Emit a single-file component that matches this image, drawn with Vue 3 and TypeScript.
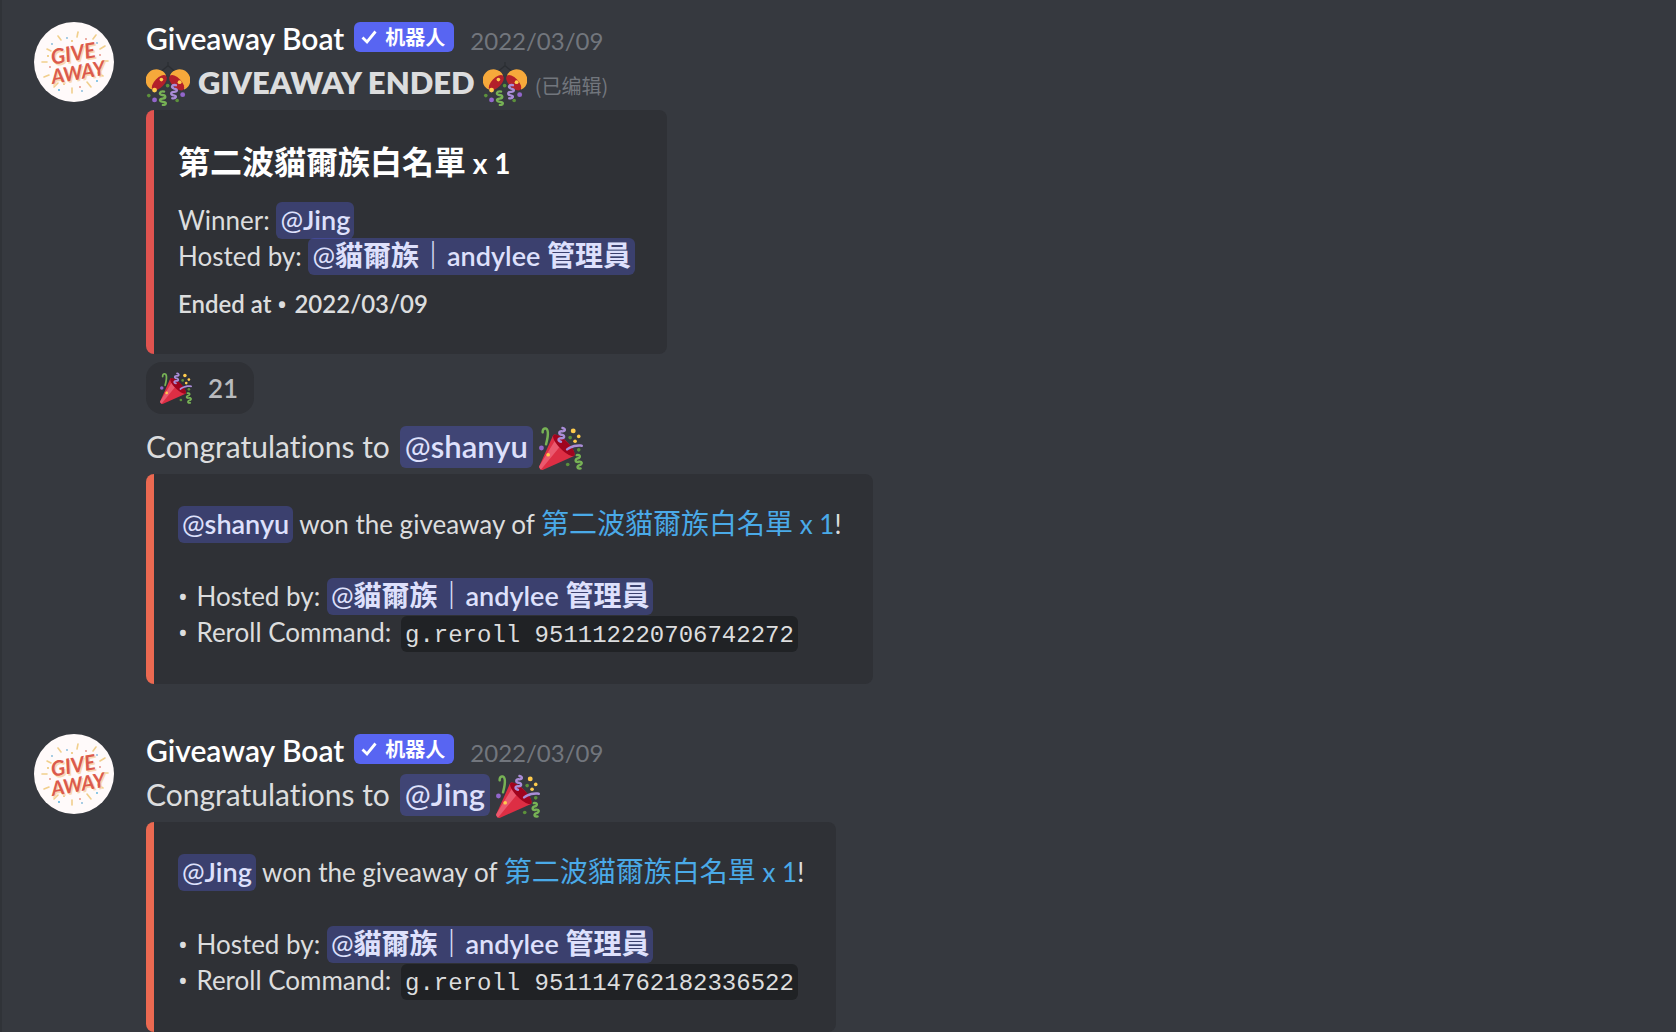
<script setup lang="ts">
import { defineComponent, h } from 'vue'

interface Winner {
  name: string
  rerollId: string
}

const prize = '第二波貓爾族白名單'
const date = '2022/03/09'
const blocks: { key: string; ended: boolean; winner: Winner }[] = [
  { key: 'first', ended: true, winner: { name: 'shanyu', rerollId: '951112220706742272' } },
  { key: 'second', ended: false, winner: { name: 'Jing', rerollId: '951114762182336522' } },
]

const rays: number[][] = [
  [44, 10, 43, 15], [24, 14, 27, 18], [13, 27, 17, 29], [8, 40, 13, 40], [10, 55, 15, 53],
  [20, 65, 24, 61], [38, 66, 38, 71], [53, 60, 57, 65], [64, 51, 69, 54], [69, 39, 74, 39],
  [66, 27, 71, 24], [59, 17, 62, 13],
]
const specks: [number, number, string][] = [
  [33, 16, '#7fb6d8'], [52, 17, '#e58a7c'], [18, 22, '#7fb6d8'], [66, 33, '#e58a7c'], [16, 45, '#e58a7c'],
  [67, 46, '#58b0dc'], [25, 68, '#3fa9dc'], [63, 59, '#58b0dc'], [46, 65, '#e58a7c'], [30, 62, '#e9bd62'],
  [14, 34, '#e9bd62'], [48, 69, '#7fb6d8'], [38, 19, '#e9bd62'], [63, 21, '#7fb6d8'],
]

const Avatar = defineComponent({
  render() {
    return h('svg', { viewBox: '0 0 80 80', role: 'img', 'aria-label': 'Giveaway Boat' }, [
      h('circle', { cx: 40, cy: 40, r: 40, fill: '#fffafa' }),
      ...rays.map(([x1, y1, x2, y2]) =>
        h('line', { x1, y1, x2, y2, stroke: '#f1cf8c', 'stroke-width': 1.6, 'stroke-linecap': 'round' })),
      ...specks.map(([cx, cy, fill]) => h('circle', { cx, cy, r: 0.9, fill })),
      ...[['#f9d9b2', 1.6], ['#dc5a4c', 0]].map(([fill, d]) =>
        h('g', {
          fill,
          transform: `translate(${d} ${d}) rotate(-10 40 40)`,
          'font-family': 'Lato, sans-serif',
          'font-weight': 700,
          'font-style': 'italic',
        }, [
          h('text', { x: 18, y: 39, 'font-size': 21 }, 'GIVE'),
          h('text', { x: 15, y: 58, 'font-size': 20 }, 'AWAY'),
        ])),
    ])
  },
})

const Popper = defineComponent({
  render() {
    return h('svg', { viewBox: '0 0 36 36', role: 'img', 'aria-label': 'party popper' }, [
      h('path', { fill: '#DD2E44', d: 'M11.626 7.488c-.112.112-.197.247-.268.395l-.008-.008L.134 33.141l.011.011c-.208.403.14 1.223.853 1.937.713.713 1.533 1.061 1.936.853l.01.01L28.21 24.735l-.008-.009c.147-.07.282-.155.395-.269 1.562-1.562-.971-6.627-5.656-11.313-4.687-4.686-9.752-7.218-11.315-5.656z' }),
      h('path', { fill: '#EA596E', d: 'M13 12L.416 32.506l-.282.635.011.011c-.208.403.14 1.223.853 1.937.232.232.473.408.709.557L17 17l-4-5z' }),
      h('path', { fill: '#A0041E', d: 'M23.012 13.066c4.67 4.672 7.263 9.652 5.789 11.124-1.473 1.474-6.453-1.118-11.126-5.788-4.671-4.672-7.263-9.654-5.79-11.127 1.474-1.473 6.454 1.119 11.127 5.791z' }),
      h('path', { fill: '#AA8DD8', d: 'M18.59 13.609c-.199.161-.459.245-.734.215-.868-.094-1.598-.396-2.109-.873-.541-.505-.808-1.183-.735-1.862.128-1.192 1.324-2.286 3.363-2.066.793.085 1.147-.17 1.159-.292.014-.121-.277-.446-1.07-.532-.868-.094-1.598-.396-2.11-.873-.541-.505-.809-1.183-.735-1.862.13-1.192 1.325-2.286 3.362-2.065.578.062.883-.057 1.012-.134.103-.063.144-.123.148-.158.012-.121-.275-.446-1.07-.532-.549-.06-.947-.552-.886-1.102.059-.549.55-.946 1.101-.886 2.037.219 2.973 1.542 2.844 2.735-.13 1.194-1.325 2.286-3.364 2.067-.578-.063-.88.057-1.01.134-.103.062-.145.123-.149.157-.013.122.276.446 1.071.532 2.037.22 2.973 1.542 2.844 2.735-.129 1.192-1.324 2.286-3.362 2.065-.578-.062-.882.058-1.012.134-.104.064-.144.124-.148.158-.013.121.276.446 1.07.532.548.06.947.553.886 1.102-.028.274-.167.511-.366.671z' }),
      h('path', { fill: '#77B255', d: 'M30.661 22.857c1.973-.557 3.334.323 3.658 1.478.324 1.154-.378 2.615-2.35 3.17-.77.216-1.001.584-.97.701.034.118.425.312 1.193.095 1.972-.555 3.333.325 3.657 1.479.326 1.155-.378 2.614-2.351 3.17-.769.216-1.001.585-.967.702.033.117.423.311 1.192.095.53-.149 1.084.16 1.233.691.148.532-.161 1.084-.693 1.234-1.971.555-3.333-.323-3.659-1.479-.324-1.154.379-2.613 2.353-3.169.77-.217 1.001-.584.967-.702-.032-.117-.422-.312-1.19-.096-1.974.556-3.334-.322-3.659-1.479-.325-1.154.378-2.613 2.351-3.17.768-.215.999-.585.967-.701-.034-.118-.423-.312-1.192-.096-.532.15-1.083-.16-1.233-.691-.149-.53.161-1.082.693-1.232z' }),
      h('path', { fill: '#AA8DD8', d: 'M23.001 20.16c-.294 0-.584-.129-.782-.375-.345-.432-.274-1.061.156-1.406.218-.175 5.418-4.259 12.767-3.208.547.078.927.584.849 1.131-.078.546-.58.93-1.132.848-6.493-.922-11.187 2.754-11.233 2.791-.186.148-.406.219-.625.219z' }),
      h('path', { fill: '#77B255', d: 'M5.754 16c-.095 0-.192-.014-.288-.042-.529-.159-.829-.716-.67-1.245 1.133-3.773 2.16-9.794.898-11.364-.141-.178-.354-.353-.842-.316-.938.072-.849 2.051-.848 2.071.042.551-.372 1.031-.922 1.072-.559.034-1.031-.372-1.072-.923-.103-1.379.326-4.035 2.692-4.214 1.056-.08 1.933.287 2.552 1.057 2.371 2.951-.036 11.506-.542 13.192-.13.433-.528.712-.958.712z' }),
      h('circle', { fill: '#5C913B', cx: 25.5, cy: 9.5, r: 1.5 }),
      h('circle', { fill: '#9266CC', cx: 2, cy: 18, r: 2 }),
      h('circle', { fill: '#5C913B', cx: 32.5, cy: 19.5, r: 1.5 }),
      h('circle', { fill: '#5C913B', cx: 23.5, cy: 31.5, r: 1.5 }),
      h('circle', { fill: '#FFCC4D', cx: 28, cy: 4, r: 2 }),
      h('circle', { fill: '#FFCC4D', cx: 32.5, cy: 8.5, r: 1.5 }),
      h('circle', { fill: '#FFCC4D', cx: 29.5, cy: 12.5, r: 1.5 }),
      h('circle', { fill: '#FFCC4D', cx: 7.5, cy: 23.5, r: 1.5 }),
    ])
  },
})

const ConfettiBall = defineComponent({
  render() {
    return h('svg', { viewBox: '0 0 36 36', role: 'img', 'aria-label': 'confetti ball' }, [
      h('path', { fill: 'none', stroke: '#2b2e33', 'stroke-width': 1, d: 'M12 8L18 3l6 5M18 0v3' }),
      h('path', { fill: '#F6A93B', d: 'M4.6 22.6A8.800 8.800 0 1 1 16.400 10.800z' }),
      h('ellipse', { fill: '#B3202A', cx: 10.9, cy: 17, rx: 7.9, ry: 3.900, transform: 'rotate(-46 10.9 17)' }),
      h('path', { fill: '#F6A93B', d: 'M31.400 22.600A8.800 8.800 0 1 0 19.600 10.800z' }),
      h('ellipse', { fill: '#B3202A', cx: 25.1, cy: 17, rx: 7.9, ry: 3.9, transform: 'rotate(46 25.1 17)' }),
      h('path', { fill: 'none', stroke: '#77B255', 'stroke-width': 1.9, 'stroke-linecap': 'round', d: 'M14.8 24.2c-4-.6-4.4 2.6-1.6 2.8 3.4.2 3.4 2.6.4 2.900-3.200.300-2.600 2.600.400 2.700 3.200.1 2.800 2.700-.2 2.500' }),
      h('path', { fill: 'none', stroke: '#AA8DD8', 'stroke-width': 1.9, 'stroke-linecap': 'round', d: 'M24.500 19c-3.800-.8-4.200 2.200-1.500 2.700 3.200.5 2.800 2.600 0 2.700-3.300.1-2.900 2.600-.3 2.900 3 .4 1.800 3-1.200 2.400' }),
      h('circle', { fill: '#FFCC4D', cx: 12.6, cy: 14.4, r: 1.5 }),
      h('circle', { fill: '#FFCC4D', cx: 7, cy: 23, r: 2 }),
      h('circle', { fill: '#FFCC4D', cx: 27.5, cy: 16.5, r: 1.6 }),
      h('circle', { fill: '#5C913B', cx: 17.7, cy: 19.3, r: 1.5 }),
      h('circle', { fill: '#5C913B', cx: 2.3, cy: 27.5, r: 1.5 }),
      h('circle', { fill: '#5C913B', cx: 25.5, cy: 31.5, r: 1.5 }),
      h('circle', { fill: '#9266CC', cx: 7, cy: 31, r: 2 }),
      h('circle', { fill: '#9266CC', cx: 30, cy: 26.7, r: 2 }),
    ])
  },
})
</script>

<template>
  <main class="chat">
    <article v-for="b in blocks" :key="b.key" class="message">
      <Avatar class="avatar" />
      <div class="body">
        <header class="head">
          <h2 class="author">Giveaway Boat</h2>
          <span class="badge">
            <svg class="check" viewBox="0 0 16 16" aria-hidden="true">
              <path d="M1.500 8.500l4.500 4.500L14.500 2.500" fill="none" stroke="#fff" stroke-width="2.800" />
            </svg>
            机器人
          </span>
          <time class="date" datetime="2022-03-09">{{ date }}</time>
        </header>

        <template v-if="b.ended">
          <p class="line">
            <ConfettiBall class="emoji" />
            <strong class="ended">GIVEAWAY ENDED</strong>
            <ConfettiBall class="emoji" />
            <small class="edited">(已编辑)</small>
          </p>
          <section class="embed red">
            <h3 class="title"><span class="han">{{ prize }}</span> x 1</h3>
            <p class="row">Winner: <span class="mention"><span class="at">@</span>Jing</span></p>
            <p class="row">
              Hosted by:
              <span class="mention"><span class="at">@</span><span class="han">貓爾族｜</span>andylee <span class="han">管理員</span></span>
            </p>
            <footer class="foot">Ended at <span class="dot">•</span> {{ date }}</footer>
          </section>
          <button class="reaction" type="button">
            <Popper class="reaction-icon" />
            <span>21</span>
          </button>
        </template>

        <p class="line">
          <span>Congratulations to</span>
          <span class="mention big"><span class="at">@</span>{{ b.winner.name }}</span>
          <Popper class="emoji" />
        </p>
        <section class="embed orange">
          <p class="row">
            <span class="mention"><span class="at">@</span>{{ b.winner.name }}</span>
            won the giveaway of
            <a class="link" href="#"><span class="han">{{ prize }}</span> x 1</a>!
          </p>
          <p class="row gap">
            <span class="dot">•</span> Hosted by:
            <span class="mention"><span class="at">@</span><span class="han">貓爾族｜</span>andylee <span class="han">管理員</span></span>
          </p>
          <p class="row">
            <span class="dot">•</span> Reroll Command: <code class="code">g.reroll {{ b.winner.rerollId }}</code>
          </p>
        </section>
      </div>
    </article>
  </main>
</template>

<style>
body {
  margin: 0;
  background: #36393f;
}
</style>

<style scoped>
.chat {
  box-sizing: border-box;
  min-height: 100vh;
  padding: 18px 32px 0;
  border-left: 2px solid #303338;
  background: #36393f;
  color: #dcddde;
  font-family: Lato, "Noto Sans CJK TC", sans-serif;
  font-variant-ligatures: none;
}
.message {
  display: flex;
  gap: 32px;
}
.message + .message {
  margin-top: 46px;
}
.avatar {
  flex: none;
  width: 80px;
  height: 80px;
  margin-top: 4px;
}
.body {
  flex: 1;
  min-width: 0;
}
.head {
  box-sizing: border-box;
  display: flex;
  align-items: baseline;
  height: 44px;
  padding-top: 2px;
}
.author {
  margin: 0;
  color: #fff;
  font-size: 30px;
  font-weight: 600;
  line-height: 36px;
}
.badge {
  box-sizing: border-box;
  display: flex;
  align-items: center;
  align-self: flex-start;
  gap: 8px;
  height: 30px;
  margin: 2px 16px 0 10px;
  padding: 0 9px 0 7px;
  border-radius: 6px;
  background: #5865f2;
  color: #fff;
  font: 600 20px/30px "Noto Sans CJK SC", sans-serif;
}
.check {
  width: 16px;
  height: 16px;
}
.date {
  color: #72767d;
  font-size: 24px;
}
.line {
  display: flex;
  align-items: flex-start;
  gap: 8px;
  height: 44px;
  margin: 0 0 4px;
  font-size: 30px;
  line-height: 40px;
  white-space: nowrap;
}
.emoji {
  flex: none;
  width: 44px;
  height: 44px;
}
.ended {
  font-size: 31px;
  font-weight: 800;
}
.edited {
  color: #72767d;
  font: 400 20px/48px "Noto Sans CJK SC", sans-serif;
}
.mention {
  padding: 1px 4px 3px;
  border-radius: 6px;
  background: rgba(88, 101, 242, 0.3);
  color: #dee0fc;
  font-size: 27px;
  font-weight: 600;
}
.mention.big {
  margin: 0 -2px 0 2px;
  padding: 0 5px 2px;
  font-size: 31px;
}
.at {
  font-weight: 400;
}
.embed {
  box-sizing: border-box;
  width: fit-content;
  max-width: 100%;
  padding: 32px 32px 34px 24px;
  border-left: 8px solid;
  border-radius: 8px;
  background: #2f3136;
}
.red {
  border-color: #e0534f;
}
.orange {
  border-color: #eb6951;
}
.title {
  margin: 0 0 18px;
  color: #fff;
  font-size: 28px;
  font-weight: 700;
  line-height: 42px;
}
.title .han {
  font-size: 32px;
}
.row {
  margin: 0;
  font-size: 26px;
  line-height: 36px;
}
.gap {
  margin-top: 36px;
}
.han {
  font-size: 28px;
  line-height: 28px;
}
.dot {
  margin-right: 2px;
  font-family: "Noto Sans", sans-serif;
  line-height: 1;
}
.foot {
  margin-top: 14px;
  font-size: 24px;
  font-weight: 600;
  line-height: 32px;
}
.link {
  color: #4aaae8;
  text-decoration: none;
}
.code {
  margin-left: 3px;
  padding: 6px 4px 3px;
  border-radius: 6px;
  background: #202225;
  font-family: "Liberation Mono", monospace;
  font-size: 24px;
  line-height: 24px;
}
.reaction {
  display: flex;
  align-items: center;
  gap: 16px;
  height: 52px;
  margin: 8px 0 12px;
  padding: 0 16px 0 14px;
  border: 0;
  border-radius: 16px;
  background: #2f3136;
  color: #b9bbbe;
  font: 600 26px/32px Lato, sans-serif;
}
.reaction-icon {
  width: 32px;
  height: 32px;
}
</style>
